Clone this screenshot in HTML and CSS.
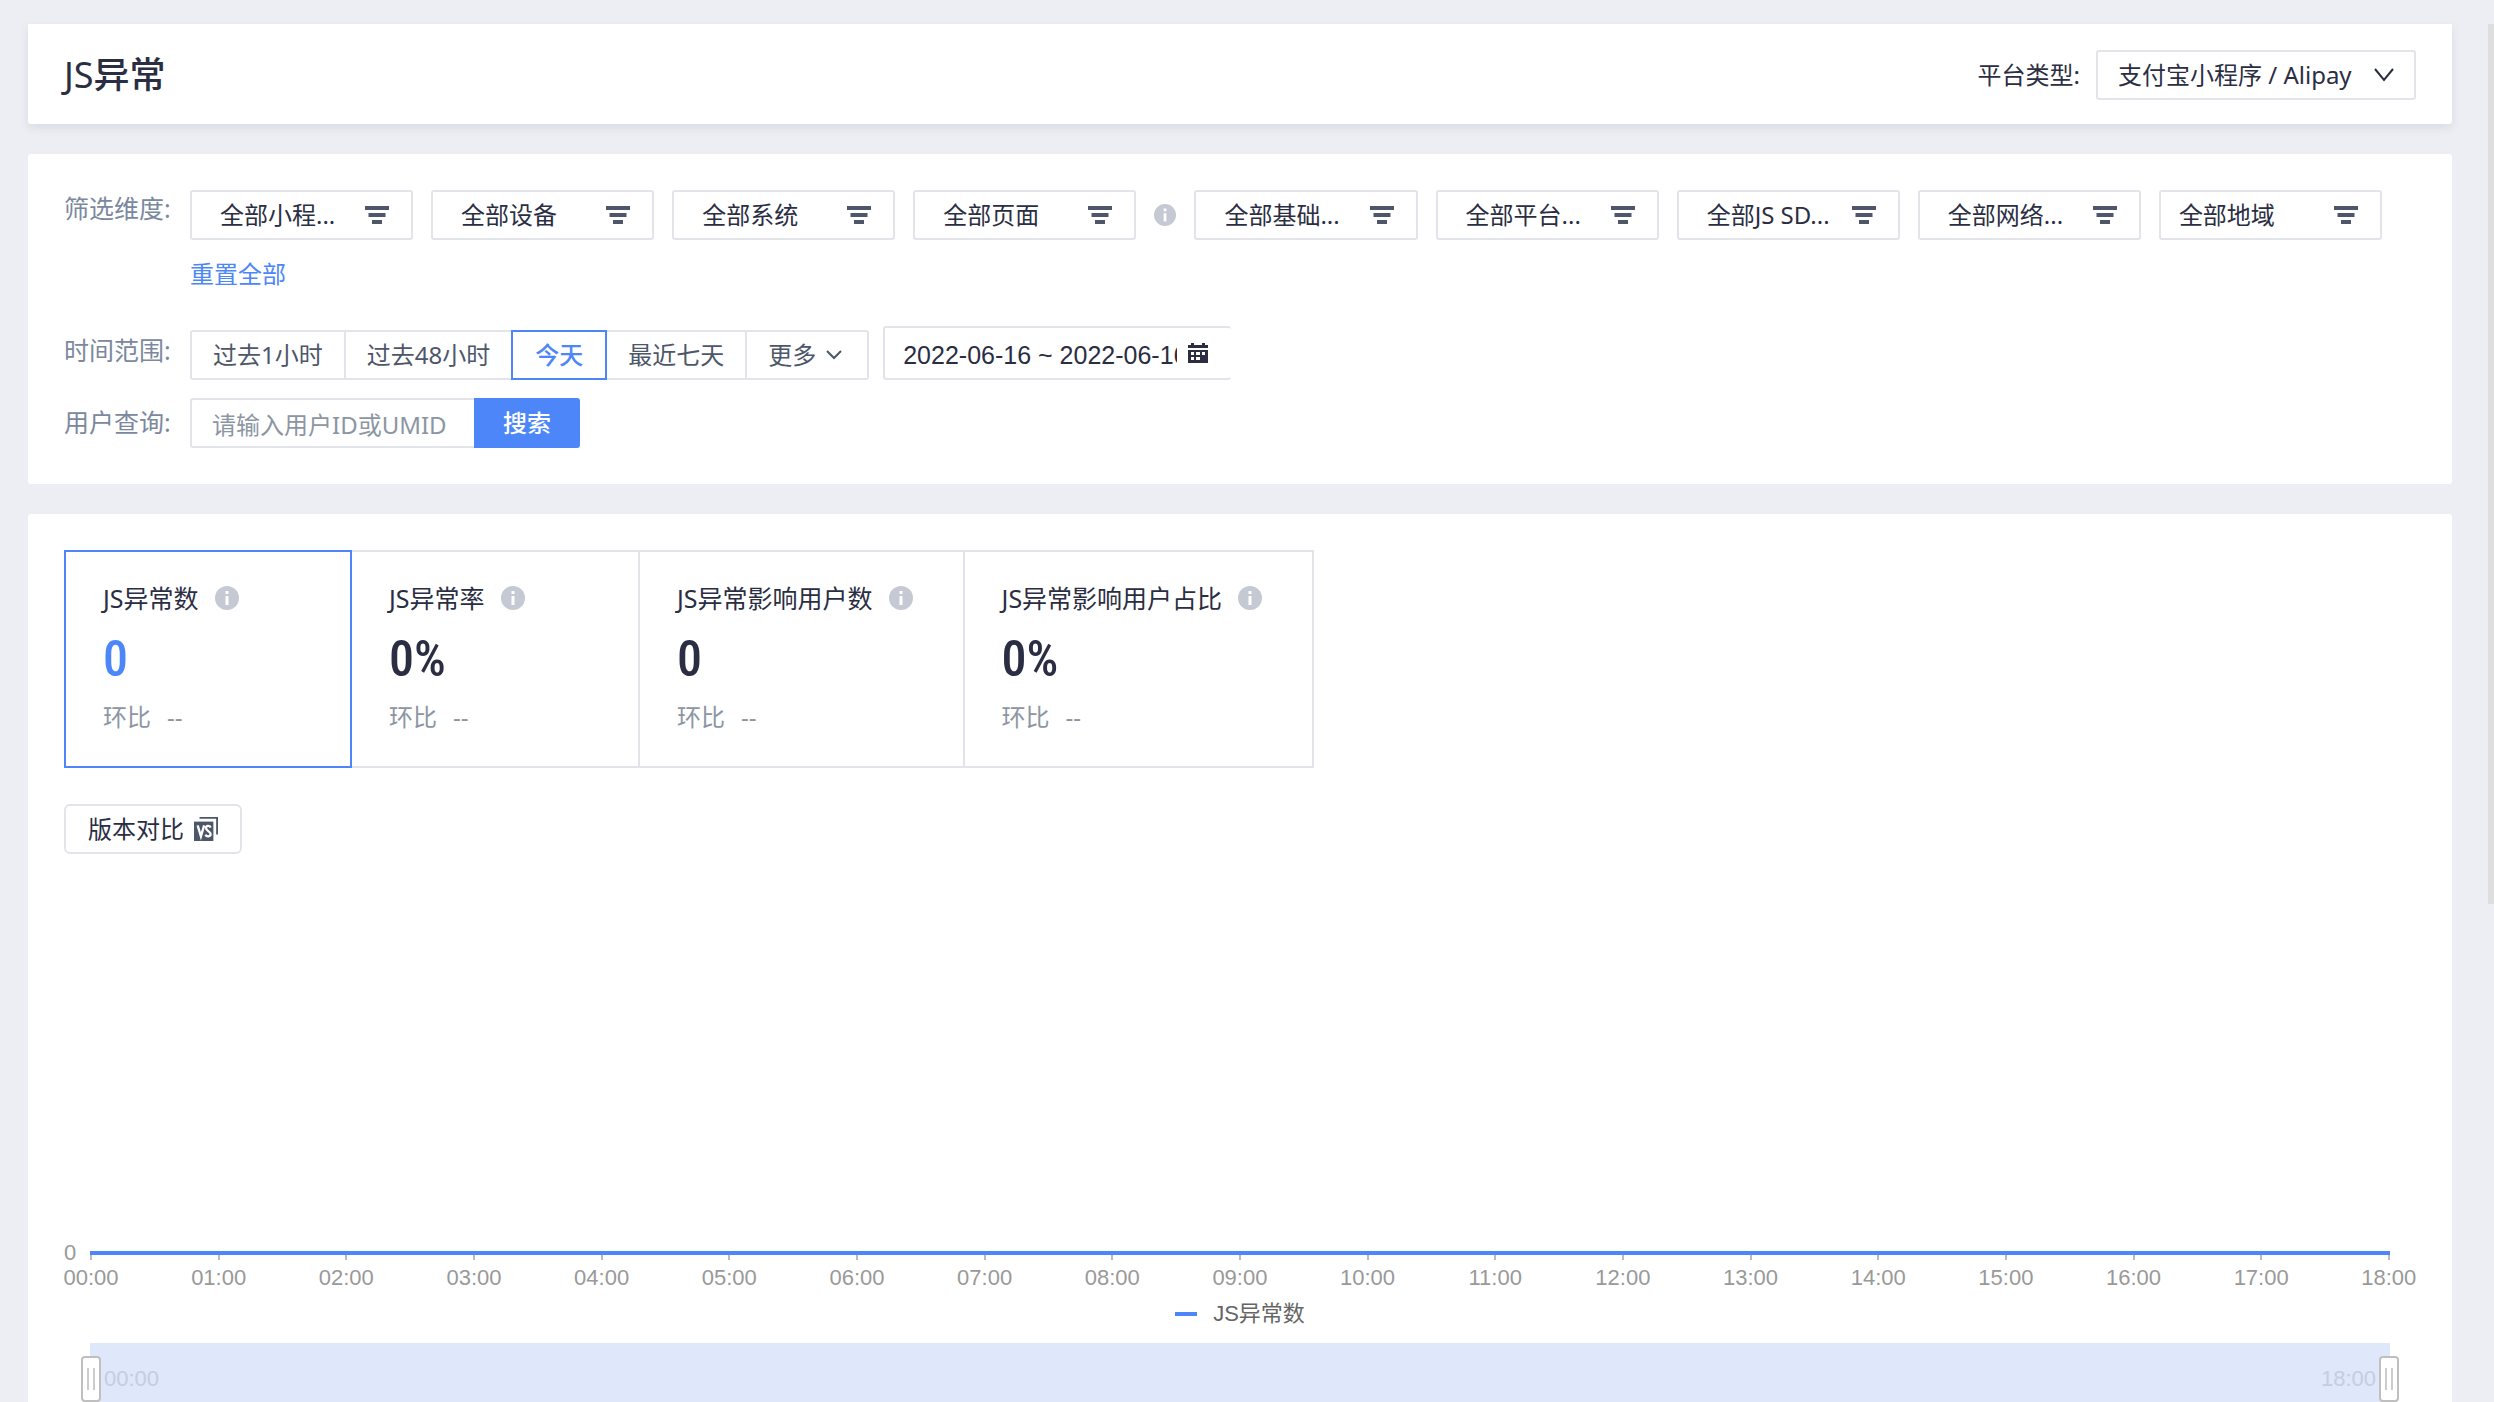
FILE: index.html
```
<!DOCTYPE html>
<html lang="zh-CN">
<head>
<meta charset="utf-8">
<meta name="viewport" content="width=device-width, initial-scale=1">
<title>JS异常</title>
<link rel="stylesheet" href="styles.css">
</head>
<body>
<svg class="sprite" aria-hidden="true">
  <symbol id="i-filter" viewBox="0 0 24 20"><path d="M0 1h24v4H0zM3.500 8h17v4h-17zM7 15h10v4H7z"/></symbol>
  <symbol id="i-info" viewBox="0 0 24 24"><circle cx="12" cy="12" r="12"/><path fill="#fff" d="M10.500 5h3v3h-3zM10.500 10h3v9h-3z"/></symbol>
</svg>
<main class="page">
  <header class="panel header">
    <h1 class="title"><span class="title-latin">JS</span>异常</h1>
    <div class="platform">
      <label for="platform">平台类型:</label>
      <span class="select-wrap">
        <select id="platform" class="select"><option>支付宝小程序 / Alipay</option></select>
        <svg class="select-arrow" viewBox="0 0 20 14"><path d="M1 1l9 11 9-11"/></svg>
      </span>
    </div>
  </header>

  <section class="panel filters">
    <div class="row row-dimension">
      <span class="row-label">筛选维度:</span>
      <div class="row-body">
        <div class="dimensions">
          <button class="dim" type="button"><span>全部小程...</span><svg><use href="#i-filter"/></svg></button>
          <button class="dim" type="button"><span>全部设备</span><svg><use href="#i-filter"/></svg></button>
          <button class="dim" type="button"><span>全部系统</span><svg><use href="#i-filter"/></svg></button>
          <button class="dim" type="button"><span>全部页面</span><svg><use href="#i-filter"/></svg></button>
          <svg class="info"><use href="#i-info"/></svg>
          <button class="dim" type="button"><span>全部基础...</span><svg><use href="#i-filter"/></svg></button>
          <button class="dim" type="button"><span>全部平台...</span><svg><use href="#i-filter"/></svg></button>
          <button class="dim" type="button"><span>全部JS SD...</span><svg><use href="#i-filter"/></svg></button>
          <button class="dim" type="button"><span>全部网络...</span><svg><use href="#i-filter"/></svg></button>
          <button class="dim dim-region" type="button"><span>全部地域</span><svg><use href="#i-filter"/></svg></button>
        </div>
        <a class="reset" href="#">重置全部</a>
      </div>
    </div>
    <div class="row row-time">
      <span class="row-label">时间范围:</span>
      <div class="ranges">
        <button class="range" type="button">过去1小时</button>
        <button class="range" type="button">过去48小时</button>
        <button class="range active" type="button">今天</button>
        <button class="range" type="button">最近七天</button>
        <button class="range more" type="button">更多<svg viewBox="0 0 16 10"><path d="M1 1l7 7 7-7"/></svg></button>
      </div>
      <div class="date">
        <input class="date-input" type="text" aria-label="日期范围" value="2022-06-16 ~ 2022-06-16" readonly>
        <svg class="calendar" viewBox="0 0 20 20"><path fill-rule="evenodd" d="M0 2h3V0h3v2h8V0h3v2h3v3H0zM0 7h20v13H0zM3 9v3h3V9zM8 9v3h4V9zM14 9v3h3V9zM3 14v3h3v-3zM8 14v3h4v-3z"/></svg>
      </div>
    </div>
    <form class="row row-user">
      <label class="row-label" for="user">用户查询:</label>
      <input id="user" class="user-input" type="text" placeholder="请输入用户ID或UMID">
      <button class="search" type="button">搜索</button>
    </form>
  </section>

  <section class="panel report">
    <div class="metrics">
      <article class="metric active">
        <h2>JS异常数<svg class="info"><use href="#i-info"/></svg></h2>
        <strong>0</strong>
        <p><span>环比</span><span>--</span></p>
      </article>
      <article class="metric">
        <h2>JS异常率<svg class="info"><use href="#i-info"/></svg></h2>
        <strong>0%</strong>
        <p><span>环比</span><span>--</span></p>
      </article>
      <article class="metric">
        <h2>JS异常影响用户数<svg class="info"><use href="#i-info"/></svg></h2>
        <strong>0</strong>
        <p><span>环比</span><span>--</span></p>
      </article>
      <article class="metric">
        <h2>JS异常影响用户占比<svg class="info"><use href="#i-info"/></svg></h2>
        <strong>0%</strong>
        <p><span>环比</span><span>--</span></p>
      </article>
    </div>
    <button class="compare" type="button">版本对比
      <svg viewBox="0 0 26 26"><path d="M6 0h20v19h-2V2H6z"/><path d="M0 5h21v21H0z"/><path class="vs" d="M4 9l3.500 12L11 9M18 11.500C17 9 13 9 13 12s5 3.500 5 6.500-4.500 3.500-5.500.500"/></svg>
    </button>
    <div class="chart">
      <div class="plot"><span class="y-label">0</span></div>
      <ol class="axis">
        <li>00:00</li><li>01:00</li><li>02:00</li><li>03:00</li><li>04:00</li><li>05:00</li><li>06:00</li><li>07:00</li><li>08:00</li><li>09:00</li><li>10:00</li><li>11:00</li><li>12:00</li><li>13:00</li><li>14:00</li><li>15:00</li><li>16:00</li><li>17:00</li><li>18:00</li>
      </ol>
      <div class="legend"><i></i>JS异常数</div>
      <div class="zoom">
        <span>00:00</span><span>18:00</span>
        <input type="range" aria-label="开始时间" min="0" max="18" value="0">
        <input type="range" aria-label="结束时间" min="0" max="18" value="18">
      </div>
    </div>
  </section>
</main>
<div class="scroll-thumb"></div>
</body>
</html>
```
FILE: styles.css
```
* { box-sizing: border-box; }

:root {
  --ink: #2b2e43;
  --slate: #4d5769;
  --label: #7b889e;
  --muted: #8c96a3;
  --line: #e3e4e9;
  --blue: #4c86f8;
}

body {
  margin: 0;
  background: #eceef4;
  color: var(--ink);
  font: 24px/36px "Noto Sans", "Noto Sans CJK SC", sans-serif;
}

button, input, select { font: inherit; color: inherit; margin: 0; }
button { cursor: pointer; }
svg { display: block; flex: none; }
.sprite { position: absolute; width: 0; height: 0; }

.page {
  height: 100vh;
  overflow: hidden auto;
  scrollbar-width: none;
  padding: 24px 42px 0 28px;
}

.panel { background: #fff; border-radius: 3px; }

.header {
  display: flex;
  align-items: center;
  justify-content: space-between;
  height: 100px;
  padding: 2px 36px 0;
  border-radius: 0 0 3px 3px;
  box-shadow: 0 4px 10px rgba(43, 46, 67, .09);
}
.title { margin: 0; font-size: 36px; line-height: 52px; font-weight: 500; }
.title-latin { font-weight: 400; }
.platform { display: flex; align-items: center; gap: 16px; }
.select-wrap { position: relative; display: block; }
.select {
  display: block;
  width: 320px;
  height: 50px;
  padding: 0 20px;
  border: 2px solid var(--line);
  border-radius: 3px;
  background: #fff;
  appearance: none;
}
.select-arrow {
  position: absolute;
  right: 22px;
  top: 18px;
  width: 20px;
  height: 14px;
  fill: none;
  stroke: var(--ink);
  stroke-width: 2;
  pointer-events: none;
}

.filters { margin-top: 30px; padding: 36px 70px 36px 36px; }
.row { display: flex; align-items: flex-start; }
.row-label { flex: none; width: 126px; color: var(--label); font-size: 25px; }
.row-body { flex: 1; }
.dimensions { display: flex; align-items: center; gap: 18px; }
.dim {
  flex: 1;
  display: flex;
  align-items: center;
  justify-content: space-between;
  min-width: 0;
  height: 50px;
  padding: 0 22px 0 18px;
  border: 2px solid var(--line);
  border-radius: 3px;
  background: #fff;
  white-space: nowrap;
}
.dim span { margin-left: 10px; }
.dim-region span { margin-left: 0; }
.dim svg { width: 24px; height: 20px; fill: var(--slate); }
.info { width: 24px; height: 24px; fill: #c4c9d3; }
.dimensions .info { width: 22px; }
.reset { display: inline-block; margin-top: 16px; color: var(--blue); text-decoration: none; }

.row-time { margin-top: 34px; }
.row-time .row-label, .row-user .row-label { padding-top: 6px; }
.ranges { display: flex; padding-top: 4px; }
.range {
  height: 50px;
  padding: 0 21px;
  border: 2px solid var(--line);
  border-left-width: 0;
  background: #fff;
  color: var(--slate);
  white-space: nowrap;
}
.range:first-child { border-left-width: 2px; border-radius: 3px 0 0 3px; }
.range:last-child { border-radius: 0 3px 3px 0; }
.range.active { margin-left: -2px; padding: 0 22px; border: 2px solid var(--blue); color: var(--blue); font-weight: 500; }
.more { display: flex; align-items: center; gap: 10px; padding: 0 25px 0 21px; }
.more svg { width: 16px; height: 10px; fill: none; stroke: var(--slate); stroke-width: 2; }
.date {
  display: flex;
  align-items: center;
  width: 348px;
  height: 54px;
  margin-left: 14px;
  padding-left: 18px;
  border: 2px solid var(--line);
  border-right: 0;
  border-radius: 3px;
}
.date-input {
  width: 274px;
  padding: 4px 0 0;
  border: 0;
  font-family: "Liberation Sans", sans-serif;
  font-size: 25px;
}
.calendar { width: 20px; height: 20px; margin-left: 11px; fill: var(--ink); }

.row-user { margin-top: 18px; }
.user-input {
  width: 284px;
  height: 50px;
  padding: 2px 20px 0;
  border: 2px solid var(--line);
  border-right: 0;
  border-radius: 3px 0 0 3px;
}
.user-input::placeholder { color: var(--muted); }
.search {
  width: 106px;
  height: 50px;
  border: 0;
  border-radius: 0 3px 3px 0;
  background: var(--blue);
  color: #fff;
  font-weight: 500;
}

.report { margin-top: 30px; padding: 36px 36px 60px; }
.metrics { display: flex; }
.metric {
  min-width: 288px;
  height: 218px;
  padding: 28px 50px 0 37px;
  border: 2px solid var(--line);
  border-left: 0;
}
.metric.active { border: 2px solid var(--blue); }
.metric h2 { display: flex; align-items: center; gap: 16px; margin: 0; font-size: 25px; line-height: 36px; font-weight: 400; white-space: nowrap; }
.metric strong { display: block; margin-top: 13px; font: 500 50px/60px "Liberation Sans Narrow", "Roboto Condensed", Roboto, sans-serif; }
.metric.active strong { color: var(--blue); }
.metric p { display: flex; gap: 16px; margin: 10px 0 0; color: var(--muted); }

.compare {
  display: flex;
  align-items: center;
  gap: 10px;
  height: 50px;
  margin-top: 36px;
  padding: 0 22px;
  border: 2px solid var(--line);
  border-radius: 6px;
  background: #fff;
}
.compare svg { width: 24px; height: 26px; fill: var(--slate); }
.compare .vs { fill: none; stroke: #fff; stroke-width: 2.500; }

.chart { padding: 0 26px; color: #999; font: 22px/28px "Liberation Sans", "Noto Sans CJK SC", sans-serif; }
.plot {
  position: relative;
  height: 401px;
  border-bottom: 4px solid var(--blue);
}
.y-label { position: absolute; left: -26px; bottom: -16px; }
.axis { display: flex; justify-content: space-between; margin: 0; padding: 0; list-style: none; }
.axis li { display: flex; flex-direction: column; align-items: center; gap: 4px; width: 2px; white-space: nowrap; }
.axis li::before { content: ""; width: 2px; height: 5px; background: #bbb; }
.legend { display: flex; align-items: center; justify-content: center; gap: 16px; margin-top: 8px; color: #666; }
.legend i { width: 22px; height: 4px; background: var(--blue); }
.zoom {
  position: relative;
  display: flex;
  align-items: center;
  justify-content: space-between;
  height: 72px;
  margin-top: 15px;
  padding: 0 14px;
  background: #dfe7fa;
  color: #c3cee2;
}
.zoom input {
  position: absolute;
  left: -9px;
  top: 13px;
  width: calc(100% + 18px);
  height: 46px;
  margin: 0;
  background: none;
  appearance: none;
  pointer-events: none;
}
.zoom input::-webkit-slider-thumb {
  width: 20px;
  height: 46px;
  border: 2px solid #bfbfbf;
  border-radius: 4px;
  background:
    linear-gradient(#ccc, #ccc) 4px 10px / 2px 22px no-repeat,
    linear-gradient(#ccc, #ccc) 10px 10px / 2px 22px no-repeat,
    #fff;
  appearance: none;
  pointer-events: auto;
}

.scroll-thumb { position: fixed; top: 24px; right: 0; width: 6px; height: 880px; background: #dedede; }
```
